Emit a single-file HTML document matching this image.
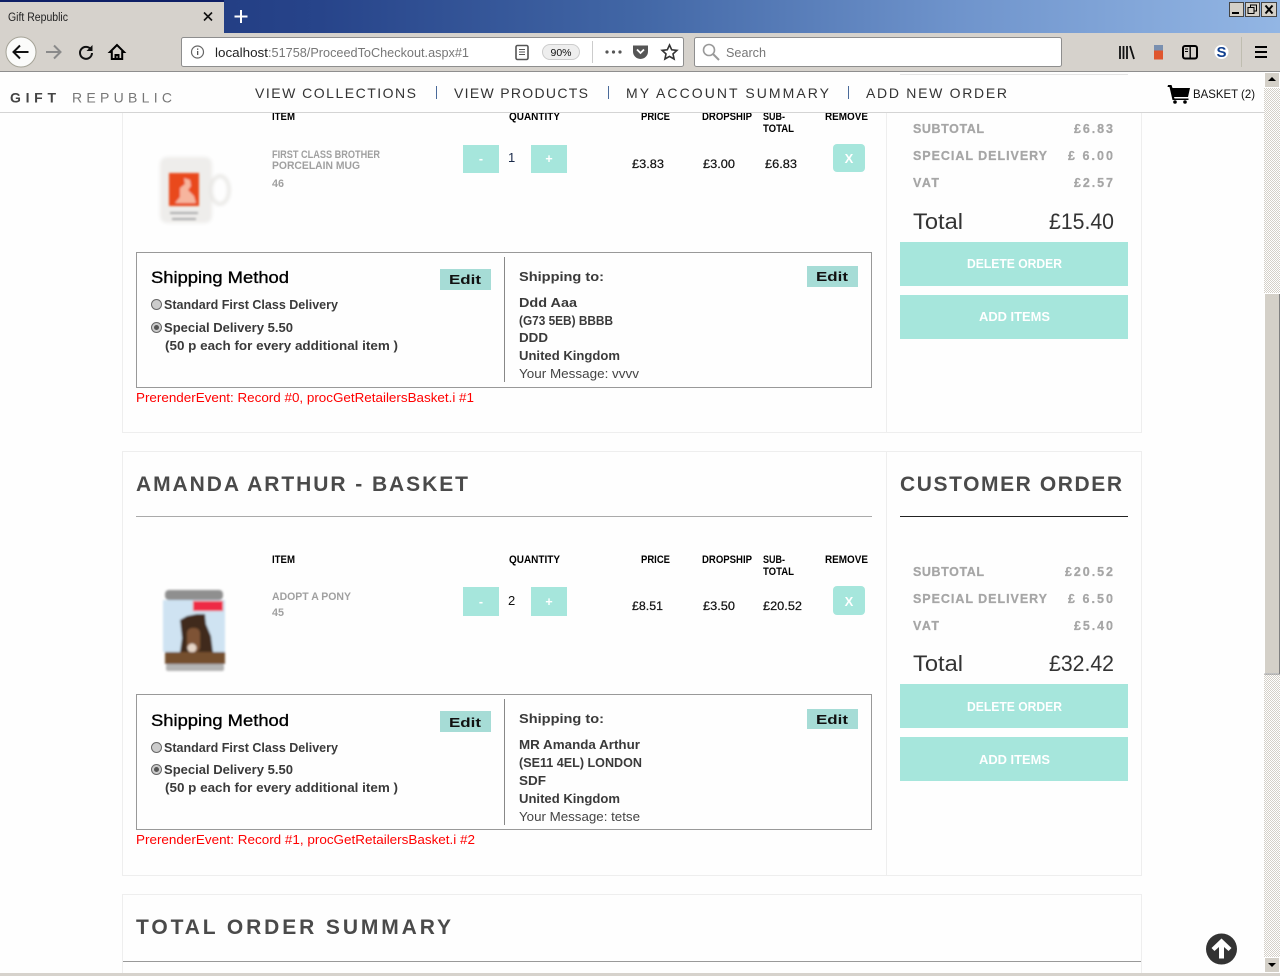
<!DOCTYPE html>
<html lang="en">
<head>
<meta charset="utf-8">
<title>Gift Republic</title>
<style>
html,body{margin:0;padding:0;background:#fefefe;overflow:hidden;width:1280px;height:976px}
svg{display:block;position:absolute;left:0;top:0}
text{font-family:"Liberation Sans",sans-serif;white-space:pre}
.h{font-weight:700;font-size:11px;fill:#000}
.n{font-weight:700;font-size:11px;fill:#a0a0a0}
.p{font-size:12px;fill:#111;stroke:#111;stroke-width:.2}
.t{font-weight:700;font-size:21px;fill:#4a4a4a}
.s{font-weight:700;font-size:12.5px;fill:#a6a6a6;stroke:#a6a6a6;stroke-width:.25}
.T{font-size:22px;fill:#333}
.b{font-weight:700;font-size:12.5px;fill:#fff}
.m{font-size:17px;fill:#000;stroke:#000;stroke-width:.35}
.e{font-weight:700;font-size:13px;fill:#111}
.l{font-weight:700;font-size:13px;fill:#3a3a3a}
.y{font-size:13px;fill:#444}
.r{font-size:13px;fill:#f00}
.v{font-size:14px;fill:#333}
</style>
</head>
<body>
<svg width="1280" height="976" viewBox="0 0 1280 976" xmlns="http://www.w3.org/2000/svg">
<defs>
<linearGradient id="tb" x1="0" y1="0" x2="1" y2="0">
<stop offset="0" stop-color="#1b3278"/><stop offset=".25" stop-color="#27448a"/><stop offset=".5" stop-color="#4267a6"/><stop offset=".75" stop-color="#6f94cc"/><stop offset="1" stop-color="#93b6e4"/>
</linearGradient>
<pattern id="dith" width="2" height="2" patternUnits="userSpaceOnUse"><rect width="2" height="2" fill="#fff"/><rect width="1" height="1" fill="#d4d0c8"/><rect x="1" y="1" width="1" height="1" fill="#d4d0c8"/></pattern>
<filter id="bl" x="-10%" y="-10%" width="120%" height="120%"><feGaussianBlur stdDeviation="1.100"/></filter>
<filter id="bl2" x="-10%" y="-10%" width="120%" height="120%"><feGaussianBlur stdDeviation="1.800"/></filter>
</defs>

<!-- page -->
<rect width="1280" height="976" fill="#fefefe"/>

<!-- card 1 -->
<path d="M122.500 72V432.500H1141.500V72M886.500 72V432" fill="none" stroke="#eee"/>
<text x="272" y="120" class="h" textLength="23" lengthAdjust="spacingAndGlyphs">ITEM</text>
<text x="509" y="120" class="h" textLength="51" lengthAdjust="spacingAndGlyphs">QUANTITY</text>
<text x="641" y="120" class="h" textLength="29" lengthAdjust="spacingAndGlyphs">PRICE</text>
<text x="702" y="120" class="h" textLength="50" lengthAdjust="spacingAndGlyphs">DROPSHIP</text>
<text x="763" y="120" class="h" textLength="22" lengthAdjust="spacingAndGlyphs">SUB-</text>
<text x="763" y="132" class="h" textLength="31" lengthAdjust="spacingAndGlyphs">TOTAL</text>
<text x="825" y="120" class="h" textLength="43" lengthAdjust="spacingAndGlyphs">REMOVE</text>
<!-- mug -->
<g filter="url(#bl2)">
<rect x="160" y="157" width="52" height="66" rx="7" fill="#eeedeb"/>
<ellipse cx="220" cy="190" rx="9" ry="14" fill="none" stroke="#e6e5e2" stroke-width="3"/>
</g>
<g filter="url(#bl)">
<rect x="169" y="173" width="30" height="33" fill="#e9481c"/>
<path d="M175 203l5-6 0-9 5-4-1-6 6 2 1 6-3 4 6 6 2 7z" fill="#f6b59e"/>
<rect x="170" y="212" width="28" height="2" fill="#aaa"/><rect x="172" y="218" width="24" height="2" fill="#aaa"/>
</g>
<text x="272" y="158" class="n" textLength="108" lengthAdjust="spacingAndGlyphs">FIRST CLASS BROTHER</text>
<text x="272" y="169" class="n" textLength="88" lengthAdjust="spacingAndGlyphs">PORCELAIN MUG</text>
<text x="272" y="187" class="n" textLength="12" lengthAdjust="spacingAndGlyphs">46</text>
<rect x="463" y="145" width="36" height="28" fill="#a6e6dc"/>
<rect x="531" y="145" width="36" height="28" fill="#a6e6dc"/>
<text x="481" y="163" class="b" text-anchor="middle">-</text>
<text x="549" y="163" class="b" text-anchor="middle">+</text>
<text x="508" y="162" font-size="13" fill="#1a2a4a">1</text>
<text x="632" y="168" class="p" textLength="32" lengthAdjust="spacingAndGlyphs">£3.83</text>
<text x="703" y="168" class="p" textLength="32" lengthAdjust="spacingAndGlyphs">£3.00</text>
<text x="765" y="168" class="p" textLength="32" lengthAdjust="spacingAndGlyphs">£6.83</text>
<rect x="833" y="144" width="32" height="28" rx="4" fill="#a6e6dc"/>
<text x="849" y="163" font-size="13" font-weight="700" fill="#fff" text-anchor="middle">X</text>
<!-- shipping 1 -->
<rect x="136.500" y="252.500" width="735" height="135" fill="none" stroke="#999"/>
<path d="M504.500 257V382" stroke="#888"/>
<text x="151" y="283" class="m" textLength="138" lengthAdjust="spacingAndGlyphs">Shipping Method</text>
<rect x="440" y="269" width="51" height="21" fill="#a6dcd6"/>
<text x="449" y="284" class="e" textLength="32" lengthAdjust="spacingAndGlyphs">Edit</text>
<circle cx="156.500" cy="304.500" r="5" fill="#ccc" stroke="#666"/>
<text x="164" y="309" class="l" textLength="174" lengthAdjust="spacingAndGlyphs">Standard First Class Delivery</text>
<circle cx="156.500" cy="327.500" r="5" fill="#ccc" stroke="#666"/><circle cx="156.500" cy="327.500" r="2.500" fill="#555"/>
<text x="164" y="332" class="l" textLength="129" lengthAdjust="spacingAndGlyphs">Special Delivery 5.50</text>
<text x="165" y="350" class="l" textLength="233" lengthAdjust="spacingAndGlyphs">(50 p each for every additional item )</text>
<text x="519" y="281" class="l" font-size="14" textLength="85" lengthAdjust="spacingAndGlyphs">Shipping to:</text>
<rect x="807" y="266" width="51" height="21" fill="#a6dcd6"/>
<text x="816" y="281" class="e" textLength="32" lengthAdjust="spacingAndGlyphs">Edit</text>
<text x="519" y="307" class="l" textLength="58" lengthAdjust="spacingAndGlyphs">Ddd Aaa</text>
<text x="519" y="325" class="l" textLength="94" lengthAdjust="spacingAndGlyphs">(G73 5EB) BBBB</text>
<text x="519" y="342" class="l" textLength="29" lengthAdjust="spacingAndGlyphs">DDD</text>
<text x="519" y="360" class="l" textLength="101" lengthAdjust="spacingAndGlyphs">United Kingdom</text>
<text x="519" y="378" class="y" textLength="120" lengthAdjust="spacingAndGlyphs">Your Message: vvvv</text>
<text x="136" y="402" class="r" textLength="338" lengthAdjust="spacingAndGlyphs">PrerenderEvent: Record #0, procGetRetailersBasket.i #1</text>
<!-- summary 1 -->
<text x="913" y="133" class="s" textLength="71" lengthAdjust="spacing">SUBTOTAL</text>
<text x="1074" y="133" class="s" textLength="39" lengthAdjust="spacing">£6.83</text>
<text x="913" y="160" class="s" textLength="134" lengthAdjust="spacing">SPECIAL DELIVERY</text>
<text x="1068" y="160" class="s" textLength="45" lengthAdjust="spacing">£ 6.00</text>
<text x="913" y="187" class="s" textLength="26" lengthAdjust="spacing">VAT</text>
<text x="1074" y="187" class="s" textLength="39" lengthAdjust="spacing">£2.57</text>
<text x="913" y="229" class="T" textLength="50" lengthAdjust="spacingAndGlyphs">Total</text>
<text x="1049" y="229" class="T" textLength="65" lengthAdjust="spacingAndGlyphs">£15.40</text>
<rect x="900" y="242" width="228" height="44" fill="#a6e6dc"/>
<text x="967" y="268" class="b" textLength="95" lengthAdjust="spacingAndGlyphs">DELETE ORDER</text>
<rect x="900" y="295" width="228" height="44" fill="#a6e6dc"/>
<text x="979" y="321" class="b" textLength="71" lengthAdjust="spacingAndGlyphs">ADD ITEMS</text>

<!-- card 2 -->
<rect x="122.500" y="451.500" width="1019" height="424" fill="none" stroke="#eee"/>
<path d="M886.500 452V875" stroke="#eee"/>
<text x="136" y="491" class="t" textLength="332" lengthAdjust="spacing">AMANDA ARTHUR - BASKET</text>
<text x="900" y="491" class="t" textLength="222" lengthAdjust="spacing">CUSTOMER ORDER</text>
<rect x="136" y="516" width="736" height="1" fill="#aaa"/>
<rect x="900" y="516" width="228" height="1" fill="#222"/>
<text x="272" y="563" class="h" textLength="23" lengthAdjust="spacingAndGlyphs">ITEM</text>
<text x="509" y="563" class="h" textLength="51" lengthAdjust="spacingAndGlyphs">QUANTITY</text>
<text x="641" y="563" class="h" textLength="29" lengthAdjust="spacingAndGlyphs">PRICE</text>
<text x="702" y="563" class="h" textLength="50" lengthAdjust="spacingAndGlyphs">DROPSHIP</text>
<text x="763" y="563" class="h" textLength="22" lengthAdjust="spacingAndGlyphs">SUB-</text>
<text x="763" y="575" class="h" textLength="31" lengthAdjust="spacingAndGlyphs">TOTAL</text>
<text x="825" y="563" class="h" textLength="43" lengthAdjust="spacingAndGlyphs">REMOVE</text>
<!-- pony -->
<g filter="url(#bl)">
<rect x="165" y="590" width="58" height="10" rx="4" fill="#8f8f8f"/>
<rect x="163" y="600" width="62" height="52" fill="#cfe3f2"/>
<rect x="193" y="601" width="30" height="10" fill="#ee2a44"/>
<path d="M180 620l7-4 10-2 8 0 1 10 5 12 2 16h-33l2-14z" fill="#3f2a1c"/>
<rect x="187" y="628" width="13" height="24" rx="5" fill="#7e5234"/>
<ellipse cx="192" cy="648" rx="4.500" ry="4.500" fill="#e6d6c8"/>
<rect x="165" y="652" width="60" height="12" fill="#74502e"/>
<rect x="166" y="664" width="58" height="7" rx="2" fill="#b4b4b4"/>
</g>
<text x="272" y="600" class="n" textLength="79" lengthAdjust="spacingAndGlyphs">ADOPT A PONY</text>
<text x="272" y="616" class="n" textLength="12" lengthAdjust="spacingAndGlyphs">45</text>
<rect x="463" y="587" width="36" height="29" fill="#a6e6dc"/>
<rect x="531" y="587" width="36" height="29" fill="#a6e6dc"/>
<text x="481" y="606" class="b" text-anchor="middle">-</text>
<text x="549" y="606" class="b" text-anchor="middle">+</text>
<text x="508" y="605" font-size="13" fill="#111">2</text>
<text x="632" y="610" class="p" textLength="31" lengthAdjust="spacingAndGlyphs">£8.51</text>
<text x="703" y="610" class="p" textLength="32" lengthAdjust="spacingAndGlyphs">£3.50</text>
<text x="763" y="610" class="p" textLength="39" lengthAdjust="spacingAndGlyphs">£20.52</text>
<rect x="833" y="586" width="32" height="29" rx="4" fill="#a6e6dc"/>
<text x="849" y="606" font-size="13" font-weight="700" fill="#fff" text-anchor="middle">X</text>
<!-- shipping 2 -->
<rect x="136.500" y="694.500" width="735" height="135" fill="none" stroke="#999"/>
<path d="M504.500 699V825" stroke="#888"/>
<text x="151" y="726" class="m" textLength="138" lengthAdjust="spacingAndGlyphs">Shipping Method</text>
<rect x="440" y="711" width="51" height="21" fill="#a6dcd6"/>
<text x="449" y="727" class="e" textLength="32" lengthAdjust="spacingAndGlyphs">Edit</text>
<circle cx="156.500" cy="747.500" r="5" fill="#ccc" stroke="#666"/>
<text x="164" y="752" class="l" textLength="174" lengthAdjust="spacingAndGlyphs">Standard First Class Delivery</text>
<circle cx="156.500" cy="769.500" r="5" fill="#ccc" stroke="#666"/><circle cx="156.500" cy="769.500" r="2.500" fill="#555"/>
<text x="164" y="774" class="l" textLength="129" lengthAdjust="spacingAndGlyphs">Special Delivery 5.50</text>
<text x="165" y="792" class="l" textLength="233" lengthAdjust="spacingAndGlyphs">(50 p each for every additional item )</text>
<text x="519" y="723" class="l" font-size="14" textLength="85" lengthAdjust="spacingAndGlyphs">Shipping to:</text>
<rect x="807" y="709" width="51" height="20" fill="#a6dcd6"/>
<text x="816" y="724" class="e" textLength="32" lengthAdjust="spacingAndGlyphs">Edit</text>
<text x="519" y="749" class="l" textLength="121" lengthAdjust="spacingAndGlyphs">MR Amanda Arthur</text>
<text x="519" y="767" class="l" textLength="123" lengthAdjust="spacingAndGlyphs">(SE11 4EL) LONDON</text>
<text x="519" y="785" class="l" textLength="27" lengthAdjust="spacingAndGlyphs">SDF</text>
<text x="519" y="803" class="l" textLength="101" lengthAdjust="spacingAndGlyphs">United Kingdom</text>
<text x="519" y="821" class="y" textLength="121" lengthAdjust="spacingAndGlyphs">Your Message: tetse</text>
<text x="136" y="844" class="r" textLength="339" lengthAdjust="spacingAndGlyphs">PrerenderEvent: Record #1, procGetRetailersBasket.i #2</text>
<!-- summary 2 -->
<text x="913" y="576" class="s" textLength="71" lengthAdjust="spacing">SUBTOTAL</text>
<text x="1065" y="576" class="s" textLength="48" lengthAdjust="spacing">£20.52</text>
<text x="913" y="603" class="s" textLength="134" lengthAdjust="spacing">SPECIAL DELIVERY</text>
<text x="1068" y="603" class="s" textLength="45" lengthAdjust="spacing">£ 6.50</text>
<text x="913" y="630" class="s" textLength="26" lengthAdjust="spacing">VAT</text>
<text x="1074" y="630" class="s" textLength="39" lengthAdjust="spacing">£5.40</text>
<text x="913" y="671" class="T" textLength="50" lengthAdjust="spacingAndGlyphs">Total</text>
<text x="1049" y="671" class="T" textLength="65" lengthAdjust="spacingAndGlyphs">£32.42</text>
<rect x="900" y="684" width="228" height="44" fill="#a6e6dc"/>
<text x="967" y="711" class="b" textLength="95" lengthAdjust="spacingAndGlyphs">DELETE ORDER</text>
<rect x="900" y="737" width="228" height="44" fill="#a6e6dc"/>
<text x="979" y="764" class="b" textLength="71" lengthAdjust="spacingAndGlyphs">ADD ITEMS</text>

<!-- card 3 -->
<path d="M122.500 973V894.500H1141.500V973" fill="none" stroke="#eee"/>
<text x="136" y="934" class="t" font-size="21" textLength="315" lengthAdjust="spacing">TOTAL ORDER SUMMARY</text>
<rect x="123" y="961" width="1018" height="1" fill="#999"/>
<circle cx="1221.500" cy="949" r="15.500" fill="#333"/>
<path d="M1221.500 938.500l10 9.500-3 3-4.500-4v11.500h-5V947l-4.500 4-3-3z" fill="#fff"/>

<!-- site header -->
<rect x="0" y="72" width="1264" height="40" fill="#fefefe"/>
<rect x="0" y="112" width="1264" height="1" fill="#d4d4d4"/>
<rect x="900" y="74" width="228" height="1" fill="#e4e4e4"/>
<text x="10" y="102.500" font-size="14" font-weight="700" fill="#444" textLength="46" lengthAdjust="spacing">GIFT</text>
<text x="72" y="102.500" font-size="14" fill="#777" textLength="100" lengthAdjust="spacing">REPUBLIC</text>
<text x="255" y="98" class="v" textLength="161" lengthAdjust="spacing">VIEW COLLECTIONS</text>
<rect x="436" y="86" width="1" height="13" fill="#4a6a9a"/>
<text x="454" y="98" class="v" textLength="134" lengthAdjust="spacing">VIEW PRODUCTS</text>
<rect x="608" y="86" width="1" height="13" fill="#4a6a9a"/>
<text x="626" y="98" class="v" textLength="203" lengthAdjust="spacing">MY ACCOUNT SUMMARY</text>
<rect x="848" y="86" width="1" height="13" fill="#4a6a9a"/>
<text x="866" y="98" class="v" textLength="141" lengthAdjust="spacing">ADD NEW ORDER</text>
<path d="M1168 85h3.500l1 3h17.500l-2 9h-14l.5 1.500h14v1.500h-16l-3-13h-2z" fill="#000"/>
<circle cx="1175" cy="102" r="1.800" fill="#000"/><circle cx="1185" cy="102" r="1.800" fill="#000"/>
<text x="1193" y="98" font-size="12" fill="#111" textLength="62" lengthAdjust="spacingAndGlyphs">BASKET (2)</text>

<!-- scrollbar -->
<rect x="1264" y="72" width="16" height="901" fill="url(#dith)"/>
<rect x="1264.500" y="72.500" width="15" height="15" fill="#d4d0c8" stroke="#fff"/>
<path d="M1272 77l4 4h-8z" fill="#000"/>
<rect x="1264.500" y="293.500" width="15" height="380" fill="#d4d0c8" stroke="#fff"/>
<path d="M1279.500 294v380h-15" fill="none" stroke="#808080"/>
<rect x="1264.500" y="957.500" width="15" height="15" fill="#d4d0c8" stroke="#fff"/>
<path d="M1268 963h8l-4 4z" fill="#000"/>
<rect x="0" y="973" width="1280" height="3" fill="#d6d2cc"/>

<!-- title bar -->
<rect width="1280" height="33" fill="url(#tb)"/>
<rect width="224" height="2" fill="#0e1f66"/>
<rect y="2" width="224" height="31" fill="#d6d2cc"/>
<text x="8" y="21" font-size="11.500" fill="#222" textLength="60" lengthAdjust="spacingAndGlyphs">Gift Republic</text>
<path d="M204 12.500l8 8m0-8l-8 8" stroke="#111" stroke-width="1.600"/>
<path d="M241 10v13M234.500 16.500h13" stroke="#fff" stroke-width="2"/>
<!-- window buttons -->
<g stroke="#444" fill="#d4d0c8">
<rect x="1229.500" y="2.500" width="14" height="14"/><rect x="1245.500" y="2.500" width="14" height="14"/><rect x="1261.500" y="2.500" width="15" height="14"/>
</g>
<rect x="1232" y="12" width="7" height="2" fill="#000"/>
<path d="M1248 7.500h6v6h-6zM1250.500 7V5h6v6h-2" fill="none" stroke="#000"/>
<path d="M1265.500 5.500l7 8m0-8l-7 8" stroke="#000" stroke-width="2"/>

<!-- toolbar -->
<rect y="33" width="1280" height="38" fill="#d6d2cc"/>
<rect y="71" width="1280" height="1" fill="#8e8e8e"/>
<circle cx="21" cy="52" r="15" fill="#fbfbfa" stroke="#a5a397"/>
<path d="M28.500 52h-15M20 45.500l-6.500 6.500 6.500 6.500" fill="none" stroke="#111" stroke-width="2"/>
<path d="M60 52H46M54 45.500l6.500 6.500-6.500 6.500" fill="none" stroke="#8a8a8a" stroke-width="2"/>
<path d="M91 49.500a6 6 0 1 0 1 3.500" fill="none" stroke="#111" stroke-width="2"/>
<path d="M92.500 45v6h-6z" fill="#111"/>
<path d="M117 45l-7 7h1.800v7h10.400v-7h1.800zM115.500 59v-4h3v4" fill="none" stroke="#000" stroke-width="2"/>
<!-- url bar -->
<rect x="181.500" y="37.500" width="502" height="29" rx="2" fill="#fff" stroke="#8e8e8e"/>
<circle cx="197.500" cy="52" r="6" fill="none" stroke="#666" stroke-width="1.200"/>
<rect x="197" y="51" width="1.300" height="4" fill="#555"/><rect x="197" y="48.500" width="1.300" height="1.300" fill="#555"/>
<text x="215" y="57" font-size="13" fill="#222" textLength="53" lengthAdjust="spacingAndGlyphs">localhost</text>
<text x="268" y="57" font-size="13" fill="#777" textLength="201" lengthAdjust="spacingAndGlyphs">:51758/ProceedToCheckout.aspx#1</text>
<rect x="516" y="45.500" width="12" height="14" rx="1.500" fill="#fff" stroke="#555" stroke-width="1.600"/>
<path d="M519 49.500h6M519 52h6M519 54.500h6" stroke="#555"/>
<rect x="542.500" y="44.500" width="37" height="15" rx="7.500" fill="#eee" stroke="#ccc"/>
<text x="561" y="56" font-size="10.500" fill="#111" text-anchor="middle">90%</text>
<rect x="592" y="41" width="1" height="22" fill="#ccc"/>
<circle cx="607" cy="52" r="1.600" fill="#555"/><circle cx="613.500" cy="52" r="1.600" fill="#555"/><circle cx="620" cy="52" r="1.600" fill="#555"/>
<path d="M633 45.500h15v6a7.500 7.500 0 0 1-15 0z" fill="#555"/>
<path d="M637 49.500l3.500 3.500 3.500-3.500" fill="none" stroke="#fff" stroke-width="1.800"/>
<path d="M669.500 45l2.200 4.800 5.200.6-3.900 3.500 1.100 5.100-4.600-2.600-4.600 2.600 1.100-5.100-3.900-3.500 5.200-.6z" fill="none" stroke="#333" stroke-width="1.600"/>
<!-- search -->
<rect x="694.500" y="37.500" width="367" height="29" rx="2" fill="#fff" stroke="#8e8e8e"/>
<circle cx="709" cy="50" r="5.500" fill="none" stroke="#999" stroke-width="1.600"/>
<path d="M713 54l6 6" stroke="#999" stroke-width="2"/>
<text x="726" y="57" font-size="12.500" fill="#777" textLength="40" lengthAdjust="spacingAndGlyphs">Search</text>
<!-- right icons -->
<path d="M1120 46v13M1123.500 46v13M1127 46v13M1130 46l4 13" stroke="#111" stroke-width="1.800"/>
<rect x="1154" y="45" width="9" height="7" fill="#7a90b0"/><rect x="1154" y="50.500" width="9" height="9" fill="#e0562e"/>
<rect x="1183" y="46" width="14" height="12.500" rx="2" fill="none" stroke="#000" stroke-width="2"/>
<rect x="1189.500" y="47" width="1.400" height="11" fill="#000"/>
<path d="M1185 49h3M1185 51.500h3" stroke="#000"/>
<circle cx="1221.500" cy="52" r="7" fill="#fff"/>
<text x="1221.500" y="57" font-size="15" font-weight="700" fill="#11408f" text-anchor="middle">S</text>
<rect x="1241" y="37" width="1" height="30" fill="#bfbdb0"/>
<path d="M1255 47h12M1255 52h12M1255 57h12" stroke="#000" stroke-width="2"/>
</svg>
</body>
</html>
